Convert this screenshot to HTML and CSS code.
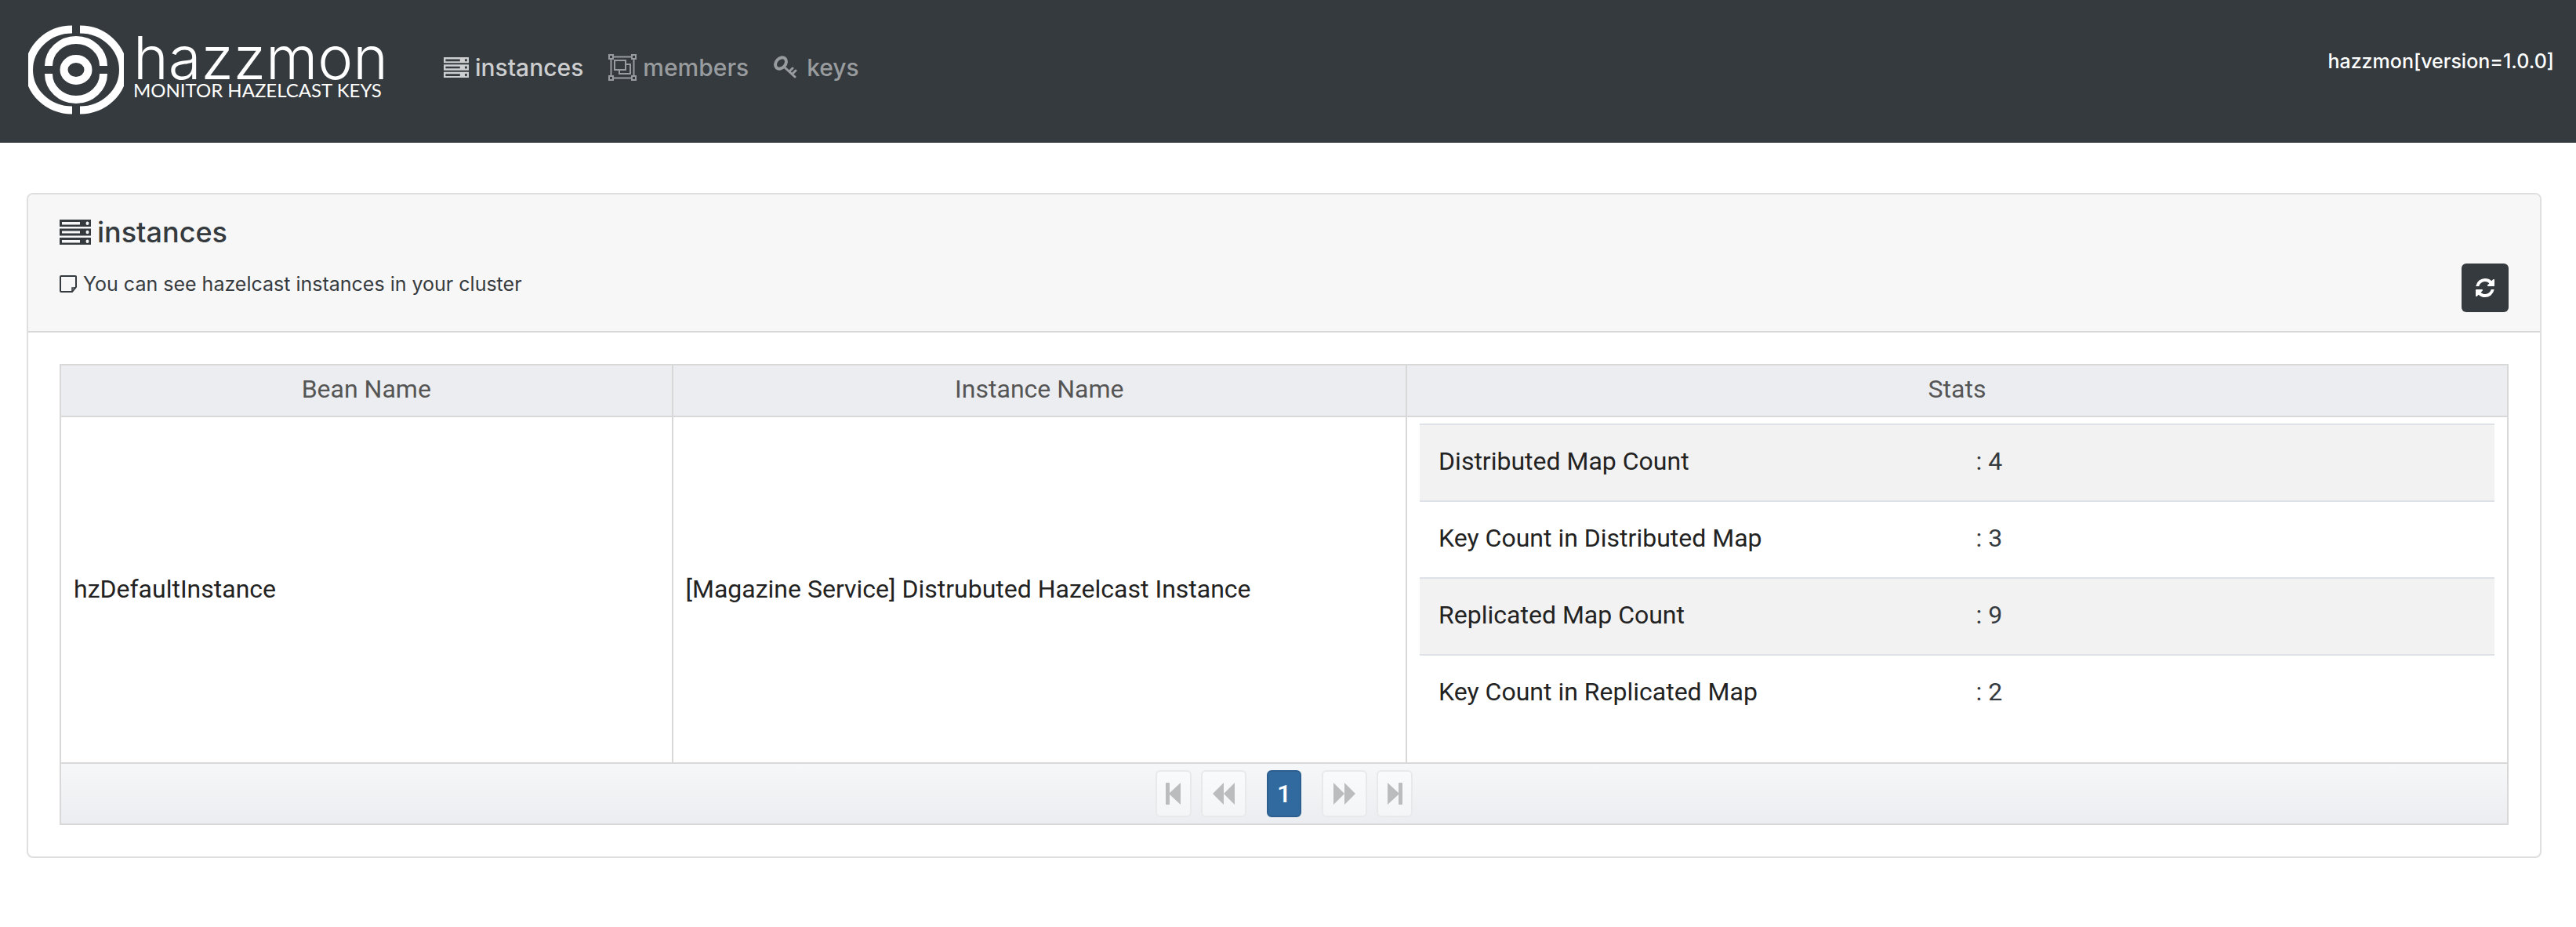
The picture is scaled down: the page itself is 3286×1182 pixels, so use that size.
FILE: index.html
```html
<!DOCTYPE html>
<html lang="en">
<head>
<meta charset="utf-8">
<title>hazzmon</title>
<meta name="viewport" content="width=device-width, initial-scale=1">
<link rel="stylesheet" href="styles.css">
</head>
<body>
<svg class="sprite" aria-hidden="true">
  <symbol id="server" viewBox="0 0 40 32" preserveAspectRatio="none">
    <path fill="currentColor" fill-rule="evenodd" d="M0 0h40v9H0zM3 3v3.500h23V3zM35.500 2.500a2 2.200 0 1 0 0 4.400a2 2.200 0 0 0 0-4.400zM0 11.500h40v9H0zM3 14.500v3h23v-3zM35.500 13.800a2 2.200 0 1 0 0 4.400a2 2.200 0 0 0 0-4.400zM0 23h40v9H0zM3 26v3.500h23V26zM35.500 25.500a2 2.200 0 1 0 0 4.400a2 2.200 0 0 0 0-4.400z"/>
  </symbol>
</svg>
<header class="navbar">
  <a class="brand" href="#">
    <svg class="brand-mark" viewBox="0 0 122 114" fill="none" stroke="#fff" stroke-width="10" aria-hidden="true">
      <path d="M56 5.500A55 51.500 0 0 0 56 108.500M66 5.500A55 51.500 0 0 1 66 108.500"/>
      <path d="M26 52A35 33 0 0 1 96 52M26 62A35 33 0 0 0 96 62"/>
      <ellipse cx="61" cy="57" rx="15.500" ry="14"/>
    </svg>
    <span class="brand-text">
      <span class="brand-name">hazzmon</span>
      <span class="brand-tagline">MONITOR HAZELCAST KEYS</span>
    </span>
  </a>
  <nav class="menu">
    <a class="menu-link active" href="#"><svg class="icon-server" aria-hidden="true"><use href="#server"/></svg>instances</a>
    <a class="menu-link" href="#"><svg class="icon-group" viewBox="0 0 36 34" fill="none" stroke="currentColor" stroke-width="2" aria-hidden="true"><path d="M1 1h5v5H1zM30 1h5v5h-5zM1 28h5v5H1zM30 28h5v5h-5zM6 3.500h24M6 30.500h24M3.500 6v22M32.500 6v22M8 8h14v12H8zM22 13h6v12H14v-5"/></svg>members</a>
    <a class="menu-link key-link" href="#"><svg class="icon-key" viewBox="0 0 30 30" fill="none" stroke="currentColor" stroke-width="4" aria-hidden="true"><ellipse cx="9" cy="9.500" rx="6" ry="8" transform="rotate(42 9 9.500)"/><path d="M14 15l13 12M20 20l4-4M24 23l4-4" stroke-width="3" stroke-linecap="round"/></svg>keys</a>
  </nav>
  <span class="version">hazzmon[version=1.0.0]</span>
</header>
<main class="card">
  <div class="card-header">
    <h1 class="card-title"><svg class="icon-server-lg" aria-hidden="true"><use href="#server"/></svg>instances</h1>
    <div class="card-intro">
      <p class="card-note"><svg class="icon-note" viewBox="0 0 22 22" fill="none" stroke="currentColor" stroke-width="2" aria-hidden="true"><path d="M1 2q0-1 1-1h18q1 0 1 1v13l-5 6H2q-1 0-1-1z"/><path d="M16 21v-5h5" stroke-width="1.500"/></svg>You can see hazelcast instances in your cluster</p>
      <button class="refresh" type="button" aria-label="Refresh"><svg class="icon-refresh" viewBox="0 0 1536 1536" fill="currentColor" aria-hidden="true"><path d="M1511 928q0 5-1 7-64 268-268 434.500T764 1536q-146 0-282.500-55T238 1324l-129 129q-19 19-45 19t-45-19-19-45V960q0-26 19-45t45-19h448q26 0 45 19t19 45-19 45l-137 137q71 66 161 102t187 36q134 0 250-65t186-179q11-17 53-117 8-23 30-23h192q13 0 22.500 9.500t9.500 22.500zm25-800v448q0 26-19 45t-45 19h-448q-26 0-45-19t-19-45 19-45l138-138Q969 256 768 256q-134 0-250 65T332 500q-11 17-53 117-8 23-30 23H50q-13 0-22.500-9.500T18 608v-7q65-268 270-434.500T768 0q146 0 284 55.500T1297 212l130-129q19-19 45-19t45 19 19 45z"/></svg></button>
    </div>
  </div>
  <div class="card-body">
    <table class="grid">
      <thead>
        <tr><th class="col-bean" scope="col">Bean Name</th><th class="col-instance" scope="col">Instance Name</th><th scope="col">Stats</th></tr>
      </thead>
      <tbody>
        <tr>
          <td>hzDefaultInstance</td>
          <td>[Magazine Service] Distrubuted Hazelcast Instance</td>
          <td class="stats-cell">
            <table class="stats">
              <tbody>
                <tr><th scope="row">Distributed Map Count</th><td>: 4</td></tr>
                <tr><th scope="row">Key Count in Distributed Map</th><td>: 3</td></tr>
                <tr><th scope="row">Replicated Map Count</th><td>: 9</td></tr>
                <tr><th scope="row">Key Count in Replicated Map</th><td>: 2</td></tr>
              </tbody>
            </table>
          </td>
        </tr>
      </tbody>
    </table>
    <div class="paginator">
      <button class="page-button" type="button" disabled aria-label="First page"><svg class="icon-edge" viewBox="0 0 20 28" fill="currentColor" aria-hidden="true"><path d="M0 1q0-1 1-1h3q1 0 1 1v12L19 0v28L5 15v12q0 1-1 1H1q-1 0-1-1z"/></svg></button>
      <button class="page-button wide" type="button" disabled aria-label="Previous page"><svg class="icon-step" viewBox="0 0 28 28" fill="currentColor" aria-hidden="true"><path d="M14 0v28L0 14zM28 0v28L14 14z"/></svg></button>
      <button class="page-button current" type="button" aria-current="page">1</button>
      <button class="page-button wide" type="button" disabled aria-label="Next page"><svg class="icon-step" viewBox="0 0 28 28" fill="currentColor" aria-hidden="true"><path d="M0 0v28l14-14zM14 0v28l14-14z"/></svg></button>
      <button class="page-button" type="button" disabled aria-label="Last page"><svg class="icon-edge" viewBox="0 0 20 28" fill="currentColor" aria-hidden="true"><path d="M20 1q0-1-1-1h-3q-1 0-1 1v12L1 0v28l14-13v12q0 1 1 1h3q1 0 1-1z"/></svg></button>
    </div>
  </div>
</main>
</body>
</html>
```
FILE: styles.css
```css
* { box-sizing: border-box; }

body {
  margin: 0;
  background: #fff;
  color: #212529;
  font: 32px/48px Roboto, sans-serif;
}

svg { display: block; flex: none; }
.sprite { position: absolute; width: 0; height: 0; }

.navbar {
  display: flex;
  align-items: flex-start;
  padding: 32px 28px 36px 36px;
  background: #353a3e;
}

.brand {
  display: flex;
  gap: 12px;
  color: #fff;
  text-decoration: none;
}
.brand-mark { width: 122px; height: 114px; }
.brand-text {
  display: flex;
  flex-direction: column;
  width: 328px;
  padding-top: 12px;
  white-space: nowrap;
}
.brand-name { font: 300 76px/58px Inter, sans-serif; }
.brand-tagline { font: 24px/26px Lato, sans-serif; }

.menu { display: flex; gap: 32px; margin-left: 68px; padding-top: 30px; }
.menu-link {
  display: flex;
  align-items: center;
  gap: 8px;
  color: #999c9f;
  font: 500 30px/48px Inter, sans-serif;
  text-decoration: none;
}
.menu-link.key-link { gap: 12px; }
.menu-link.active { color: #ccced0; }
.icon-server { width: 32px; height: 26px; }
.icon-group { width: 36px; height: 34px; }
.icon-key { width: 30px; height: 30px; }

.version {
  margin-left: auto;
  padding-top: 22px;
  color: #fff;
  font: 500 25px/48px Inter, sans-serif;
}

.card {
  margin: 64px 44px 64px 34px;
  border: 2px solid #dfdfdf;
  border-radius: 8px;
}
.card-header {
  padding: 24px 40px;
  border-bottom: 2px solid #d8d8d8;
  border-radius: 6px 6px 0 0;
  background: #f7f7f7;
  color: #353a3e;
}
.card-title {
  display: flex;
  align-items: center;
  gap: 8px;
  margin: 0 0 16px;
  font: 500 36px/48px Inter, sans-serif;
}
.icon-server-lg { width: 40px; height: 32px; }
.card-intro { display: flex; justify-content: space-between; align-items: flex-start; }
.card-note {
  display: flex;
  align-items: center;
  gap: 8px;
  margin: 0;
  font: 25px/52px Inter, sans-serif;
}
.icon-note { width: 22px; height: 22px; }
.refresh {
  display: flex;
  align-items: center;
  justify-content: center;
  width: 60px;
  height: 62px;
  padding: 0;
  border: 0;
  border-radius: 6px;
  background: #353a3e;
  color: #fff;
}
.icon-refresh { width: 24px; height: 24px; }

.card-body { padding: 40px; }
.grid {
  width: 100%;
  border-collapse: collapse;
  table-layout: fixed;
  color: #222;
}
.grid > * > tr > * { border: 2px solid #d8d8d8; }
.grid > thead th {
  padding: 6px 16px 10px;
  background: #ebedf0;
  color: #555;
  font-weight: 400;
}
.grid > tbody > tr > td { padding: 8px 16px 10px; }
.grid > tbody > tr > .stats-cell { padding-bottom: 8px; }
.col-bean { width: 25%; }
.col-instance { width: 30%; }

.stats {
  width: 100%;
  margin-bottom: 32px;
  border-collapse: separate;
  border-spacing: 0;
  table-layout: fixed;
}
.stats th,
.stats td {
  padding: 22px 24px 26px;
  border-top: 2px solid #dee2e6;
  font-weight: 400;
  text-align: left;
}
.stats tr:nth-child(odd) { background: #f2f2f2; }
.stats td { color: #353a3e; }

.paginator {
  display: flex;
  justify-content: center;
  gap: 12px;
  padding: 8px;
  border: 2px solid #d8d8d8;
  border-top: 0;
  background: linear-gradient(#f6f7f9, #ebedf0);
}
.page-button {
  display: flex;
  align-items: center;
  justify-content: center;
  width: 46px;
  height: 60px;
  padding: 0;
  border: 2px solid #e8e9eb;
  border-radius: 6px;
  background: linear-gradient(#f9fafb, #f4f5f7);
  color: #bbbcbe;
  font: 500 32px/48px Roboto, sans-serif;
}
.page-button.wide { width: 58px; }
.page-button.current {
  width: 44px;
  margin: 0 14px;
  border-color: #2c5f8f;
  background: #316a9e;
  color: #fff;
}
.icon-edge { width: 20px; height: 28px; }
.icon-step { width: 28px; height: 28px; }
```
